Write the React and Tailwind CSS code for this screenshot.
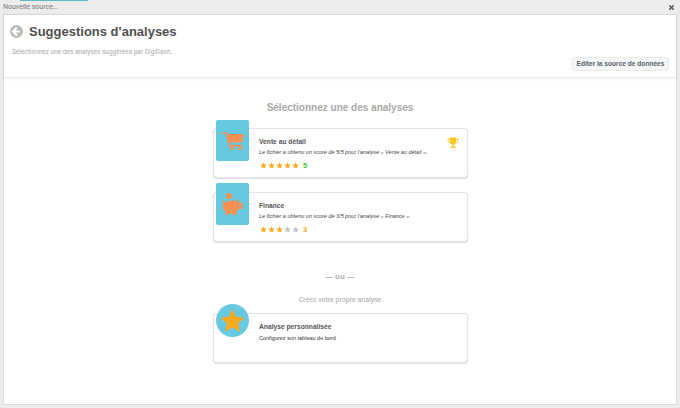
import { X } from 'lucide-react';

function Star({ on = true }) {
    return (
        <svg viewBox="0 0 24 24" className={`w-[7px] h-[7px] ${on ? 'fill-[#fbaa1d]' : 'fill-[#c4c4c4]'}`}>
            <path d="M12 1l3.4 7.4 8 .9-6 5.4 1.7 8L12 18.7 4.9 22.7l1.7-8-6-5.4 8-.9z" />
        </svg>
    );
}

function Stars({ score, color }) {
    return (
        <div className="flex items-center mt-[5px] ml-px h-[9px]">
            <div className="flex gap-px">
                {[1, 2, 3, 4, 5].map((n) => (
                    <Star key={n} on={n <= score} />
                ))}
            </div>
            <span className={`ml-[4px] text-[7.5px] font-bold leading-none ${color}`}>{score}</span>
        </div>
    );
}

function CartIcon() {
    return (
        <svg viewBox="0 0 22 18" className="w-[22px] h-[18px]">
            <path d="M0 1h4.5L7.5 13.5H20" fill="none" stroke="#f98f52" strokeWidth="1.6" />
            <path d="M5 2h17l-2 8.5H7z" fill="#f98f52" />
            <circle cx="10" cy="16" r="1.5" fill="none" stroke="#f98f52" strokeWidth="1.3" />
            <circle cx="18" cy="16" r="1.5" fill="none" stroke="#f98f52" strokeWidth="1.3" />
        </svg>
    );
}

function PiggyIcon() {
    return (
        <svg viewBox="0 0 21 22" className="w-[21px] h-[22px]">
            <circle cx="7" cy="3" r="3" fill="#f98f52" />
            <ellipse cx="9" cy="14" rx="8" ry="6.5" fill="#f98f52" />
            <path d="M0 7l4 3-2.5 3zM12 9l4-3 1 5zM3.5 18h3.5v4H3.5zM11 18h3.5v4H11z" fill="#f98f52" />
            <circle cx="17.7" cy="13" r="3.3" fill="#f98f52" />
            <circle cx="18" cy="12.7" r="1" fill="#66c9df" />
        </svg>
    );
}

function Trophy() {
    return (
        <svg viewBox="0 0 24 24" className="absolute right-[8px] top-[8px] w-3 h-3">
            <path d="M6 1h12v8a6 6 0 0 1-12 0z" fill="#fdc51e" />
            <path d="M6 4H2c0 5 2 7 5 8M18 4h4c0 5-2 7-5 8" fill="none" stroke="#fdc51e" strokeWidth="2" />
            <path d="M10.5 14h3v4h-3zM7 19h10v3H7z" fill="#fdc51e" />
        </svg>
    );
}

function Card({ title, children, icon, iconClass, className = '', extra }) {
    return (
        <div className={`relative w-[253px] h-[48px] bg-white rounded-[2px] shadow-[0_1px_2px_rgba(0,0,0,0.4)] outline outline-[#e4e4e4] pl-[45.5px] pt-[8px] ${className}`}>
            <div className={`absolute left-[2.5px] bg-[#66c9df] flex items-center justify-center ${iconClass}`}>
                {icon}
            </div>
            {extra}
            <div className="text-[6.7px] font-bold leading-[9px] text-[#555555]">{title}</div>
            {children}
        </div>
    );
}

export default function App() {
    return (
        <div className="w-[680px] h-[408px] bg-[#ececec] flex flex-col overflow-hidden font-['Liberation_Sans',sans-serif]">
            {/* barre de titre */}
            <div className="h-[14px] shrink-0 relative flex items-center justify-between pl-[3px] pr-[5px]">
                <div className="absolute left-[20px] top-0 w-[68px] h-px bg-[#5bbcc4]" />
                <span className="text-[7px] text-[#777777] font-['Roboto',sans-serif]">Nouvelle source...</span>
                <X className="w-[7px] h-[7px] text-[#555555]" strokeWidth={5} />
            </div>

            <div className="flex-1 mx-[3px] mb-[3px] bg-white border border-[#dcdcdc] flex flex-col">
                <div className="h-[62px] shrink-0 shadow-[0_1px_3px_rgba(0,0,0,0.12)] pl-[6px] pr-[7px] flex flex-col">
                    <div className="flex items-center mt-[8px] h-[16px]">
                        <div className="w-[13px] h-[13px] rounded-full bg-[#b9b9b9] flex items-center justify-center">
                            <svg viewBox="0 0 13 13" className="w-[13px] h-[13px]">
                                <path d="M7 2.5L3 6.5l4 4M3.5 6.5h6.5" fill="none" stroke="#ffffff" strokeWidth="2.2" />
                            </svg>
                        </div>
                        <h1 className="ml-[6px] text-[13px] font-bold text-[#505050] leading-none">Suggestions d'analyses</h1>
                    </div>
                    <p className="mt-[9px] ml-[2px] text-[6.5px] leading-[8px] text-[#a9a9a9] font-['Roboto',sans-serif]">Sélectionnez une des analyses suggérées par DigiDash.</p>
                    <div className="flex justify-end mt-px">
                        <button className="h-[14px] w-[97px] rounded-[3px] bg-[#f5f5f5] border border-[#eaeaea] text-[6.6px] font-bold text-[#555f6e] whitespace-nowrap">
                            Editer la source de données
                        </button>
                    </div>
                </div>

                <div className="flex-1 flex flex-col items-center">
                    <h2 className="mt-[25px] text-[10px] leading-[12px] font-bold text-[#a8a8a8]">Sélectionnez une des analyses</h2>

                    <Card
                        title="Vente au détail"
                        className="mt-[15px]"
                        iconClass="top-[-9px] w-[33px] h-[41px] rounded-[2px]"
                        icon={<CartIcon />}
                        extra={<Trophy />}
                    >
                        <p className="mt-[3px] text-[5.5px] italic leading-[7px] text-[#444444]">Le fichier a obtenu un score de 5/5 pour l'analyse « Vente au détail ».</p>
                        <Stars score={5} color="text-[#3fc52a]" />
                    </Card>

                    <Card
                        title="Finance"
                        className="mt-[16px]"
                        iconClass="top-[-10px] w-[33px] h-[42px] rounded-[2px]"
                        icon={<PiggyIcon />}
                    >
                        <p className="mt-[3px] text-[5.5px] italic leading-[7px] text-[#444444]">Le fichier a obtenu un score de 3/5 pour l'analyse « Finance ».</p>
                        <Stars score={3} color="text-[#fbaa1d]" />
                    </Card>

                    <div className="mt-[31px] text-[8px] font-bold leading-[9px] text-[#b0b0b0]">— ou —</div>
                    <div className="mt-[15px] text-[7px] leading-[9px] text-[#a8a8a8] font-['Roboto',sans-serif]">Créez votre propre analyse</div>

                    <Card
                        title="Analyse personnalisée"
                        className="mt-[9px]"
                        iconClass="top-[-10px] w-[33px] h-[33px] rounded-full"
                        icon={
                            <svg viewBox="0 0 24 24" className="w-[25px] h-[25px] fill-[#fbaa1d]">
                                <path d="M12 1l3.4 7.4 8 .9-6 5.4 1.7 8L12 18.7 4.9 22.7l1.7-8-6-5.4 8-.9z" />
                            </svg>
                        }
                    >
                        <p className="mt-[4px] text-[5.5px] leading-[7px] text-[#333333]">Configurez son tableau de bord</p>
                    </Card>
                </div>
            </div>
        </div>
    );
}
